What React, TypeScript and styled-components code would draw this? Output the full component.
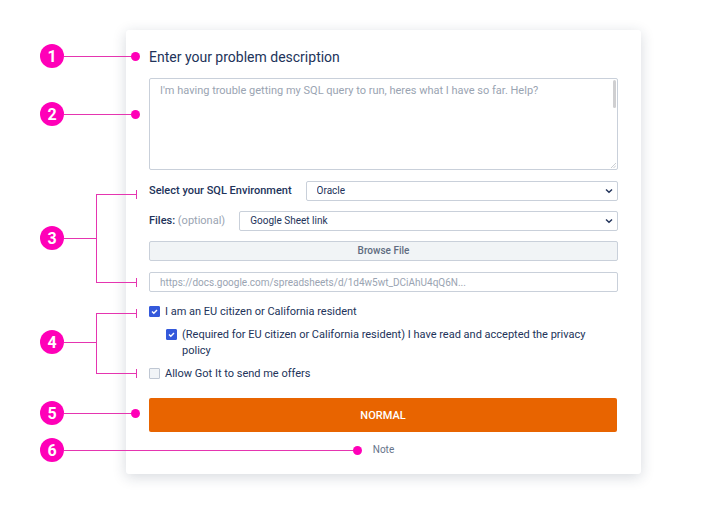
import React from "react";
import styled, { createGlobalStyle, css } from "styled-components";

const ink = "#22335a";
const muted = "#9aa4b2";
const border = "#c9d0da";
const pink = "#ff00b8";
const line = "#e535b0";

const GlobalStyle = createGlobalStyle`
  * { box-sizing: border-box; }
  body {
    margin: 0;
    background: #fff;
    color: ${ink};
    font-family: Roboto, "Liberation Sans", sans-serif;
  }
  input, select, textarea, button { font: inherit; color: inherit; margin: 0; }
`;

const Page = styled.main`
  padding: 30px 78px 38px 126px;
`;

const Card = styled.form`
  display: flex;
  flex-direction: column;
  padding: 18px 23px 16px;
  background: #fff;
  border-radius: 3px;
  box-shadow: 0 3px 14px rgba(30, 42, 70, 0.18);
`;

const Section = styled.section<{ $top?: number; $gap?: number }>`
  position: relative;
  display: flex;
  flex-direction: column;
  gap: ${(p) => p.$gap ?? 0}px;
  margin-top: ${(p) => p.$top ?? 0}px;
`;

const Title = styled.label`
  font-size: 14px;
  line-height: 18px;
`;

const Stack = styled.div`
  display: grid;
  flex: 1;
  min-width: 0;
  > * { grid-area: 1 / 1; }
`;

const field = css`
  width: 100%;
  border: 1px solid ${border};
  border-radius: 2px;
  background: #fff;
  outline-color: ${pink};
`;

const Description = styled.textarea`
  ${field}
  display: block;
  height: 92px;
  padding: 3px 10px;
  font-size: 11px;
  line-height: 18px;
  resize: none;
  &::placeholder { color: ${muted}; opacity: 1; }
`;

const ScrollThumb = styled.span`
  justify-self: end;
  width: 3px;
  height: 28px;
  margin: 2px 2px 0 0;
  border-radius: 2px;
  background: #cfcfd1;
`;

const Grip = styled.svg`
  place-self: end;
  margin: 0 2px 2px 0;
  pointer-events: none;
`;

const Row = styled.div`
  display: flex;
  align-items: center;
`;

const FieldLabel = styled.label`
  margin-right: 14px;
  font-size: 11px;
  line-height: 20px;
  font-weight: 500;
`;

const Optional = styled.span`
  font-weight: 400;
  color: ${muted};
`;

const Select = styled.select`
  ${field}
  appearance: none;
  height: 20px;
  padding: 0 20px 0 10px;
  font-size: 10px;
  line-height: 18px;
`;

const Chevron = styled.svg`
  place-self: center end;
  margin-right: 5px;
  pointer-events: none;
`;

const BrowseButton = styled.button`
  ${field}
  height: 20px;
  padding: 0;
  background: #f1f4f6;
  color: #5f6c80;
  font-size: 10px;
  line-height: 18px;
  font-weight: 500;
`;

const LinkInput = styled.input`
  ${field}
  height: 20px;
  padding: 0 10px;
  font-size: 10px;
  line-height: 18px;
  &::placeholder { color: ${muted}; opacity: 1; }
`;

const Choice = styled.label<{ $nested?: boolean }>`
  display: flex;
  align-items: flex-start;
  gap: 5px;
  padding-right: 16px;
  margin-left: ${(p) => (p.$nested ? 17 : 0)}px;
  font-size: 11px;
  line-height: 16px;
`;

const Box = styled.span`
  display: grid;
  flex: none;
  margin-top: 2px;
  > * { grid-area: 1 / 1; }
`;

const Tick = styled.input`
  appearance: none;
  width: 11px;
  height: 11px;
  border: 1px solid #bfc7d3;
  border-radius: 1px;
  background: #f1f4f7;
  &:checked { border-color: #3459db; background: #3459db; }
  &:not(:checked) + svg { display: none; }
`;

const TickMark = styled.svg`
  pointer-events: none;
`;

const Submit = styled.button`
  height: 34px;
  margin-right: 1px;
  border: 0;
  border-radius: 2px;
  background: #e86400;
  color: #fff;
  font-size: 11px;
  font-weight: 500;
`;

const Note = styled.p`
  margin: 0;
  text-align: center;
  color: #66738a;
  font-size: 10px;
  line-height: 16px;
`;

/* Callouts hang in the margin to the left of the section that they number. */
const CalloutRow = styled.div<{ $top: number; $reach: string }>`
  position: absolute;
  top: ${(p) => p.$top}px;
  left: -109px;
  width: ${(p) => p.$reach};
  height: 24px;
  display: flex;
  align-items: center;
  pointer-events: none;
`;

const Badge = styled.span`
  flex: none;
  width: 24px;
  height: 24px;
  border-radius: 50%;
  background: ${pink};
  color: #fff;
  font-size: 16px;
  line-height: 25px;
  font-weight: 700;
  text-align: center;
`;

const Lead = styled.span`
  flex: 1;
  height: 1px;
  background: ${line};
`;

const Dot = styled.span`
  flex: none;
  width: 9px;
  height: 9px;
  border-radius: 50%;
  background: ${pink};
`;

const Bracket = styled.span<{ $top: number; $height: number }>`
  position: absolute;
  top: ${(p) => p.$top}px;
  left: -53px;
  width: 41px;
  height: ${(p) => p.$height}px;
  border: 1px solid ${line};
  border-right: 0;
  pointer-events: none;
  &::before, &::after {
    content: "";
    position: absolute;
    right: 0;
    width: 1px;
    height: 9px;
    background: ${line};
  }
  &::before { top: -5px; }
  &::after { bottom: -5px; }
`;

function Callout({ n, top, reach = "100px", dot = true }: { n: number; top: number; reach?: string; dot?: boolean }) {
  return (
    <CalloutRow $top={top} $reach={reach}>
      <Badge>{n}</Badge>
      <Lead />
      {dot && <Dot />}
    </CalloutRow>
  );
}

function Dropdown({ id, value }: { id: string; value: string }) {
  return (
    <Stack>
      <Select id={id} defaultValue={value}>
        <option>{value}</option>
      </Select>
      <Chevron width="8" height="6" viewBox="0 0 8 6" fill="none" stroke={ink} strokeWidth="1.4" aria-hidden="true">
        <path d="M1 1.5 4 4.3 7 1.5" />
      </Chevron>
    </Stack>
  );
}

function CheckChoice({ text, nested, checked }: { text: string; nested?: boolean; checked?: boolean }) {
  return (
    <Choice $nested={nested}>
      <Box>
        <Tick type="checkbox" defaultChecked={checked} />
        <TickMark width="11" height="11" viewBox="0 0 11 11" fill="none" stroke="#fff" strokeWidth="1.4" aria-hidden="true">
          <path d="M3 5.5 4.8 7.2 8 3.9" />
        </TickMark>
      </Box>
      <span>{text}</span>
    </Choice>
  );
}

export default function App() {
  return (
    <>
      <GlobalStyle />
      <Page>
        <Card onSubmit={(e) => e.preventDefault()}>
          <Section>
            <Title htmlFor="description">Enter your problem description</Title>
            <Callout n={1} top={-4} />
          </Section>

          <Section $top={12}>
            <Stack>
              <Description
                id="description"
                placeholder="I'm having trouble getting my SQL query to run, heres what I have so far. Help?"
              />
              <ScrollThumb />
              <Grip width="5" height="5" viewBox="0 0 5 5" stroke="#b5bac2" strokeWidth="0.7" aria-hidden="true">
                <path d="M0 5 5 0M2.5 5 5 2.5" />
              </Grip>
            </Stack>
            <Callout n={2} top={24} />
          </Section>

          <Section $top={11} $gap={10}>
            <Row>
              <FieldLabel htmlFor="environment">Select your SQL Environment</FieldLabel>
              <Dropdown id="environment" value="Oracle" />
            </Row>
            <Row>
              <FieldLabel htmlFor="files">
                Files: <Optional>(optional)</Optional>
              </FieldLabel>
              <Dropdown id="files" value="Google Sheet link" />
            </Row>
            <BrowseButton type="button">Browse File</BrowseButton>
            <Bracket $top={13} $height={89} />
            <Callout n={3} top={45} reach="56px" dot={false} />
          </Section>

          <Section $top={11}>
            <LinkInput
              type="url"
              aria-label="Google Sheet link"
              placeholder="https://docs.google.com/spreadsheets/d/1d4w5wt_DCiAhU4qQ6N..."
            />
          </Section>

          <Section $top={12} $gap={7}>
            <CheckChoice checked text="I am an EU citizen or California resident" />
            <CheckChoice
              checked
              nested
              text="(Required for EU citizen or California resident) I have read and accepted the privacy policy"
            />
            <CheckChoice text="Allow Got It to send me offers" />
            <Bracket $top={9} $height={61} />
            <Callout n={4} top={26} reach="56px" dot={false} />
          </Section>

          <Section $top={16}>
            <Submit type="submit">NORMAL</Submit>
            <Callout n={5} top={3} />
          </Section>

          <Section $top={10}>
            <Note>Note</Note>
            <Callout n={6} top={-4} reach="calc(50% + 87px)" />
          </Section>
        </Card>
      </Page>
    </>
  );
}
